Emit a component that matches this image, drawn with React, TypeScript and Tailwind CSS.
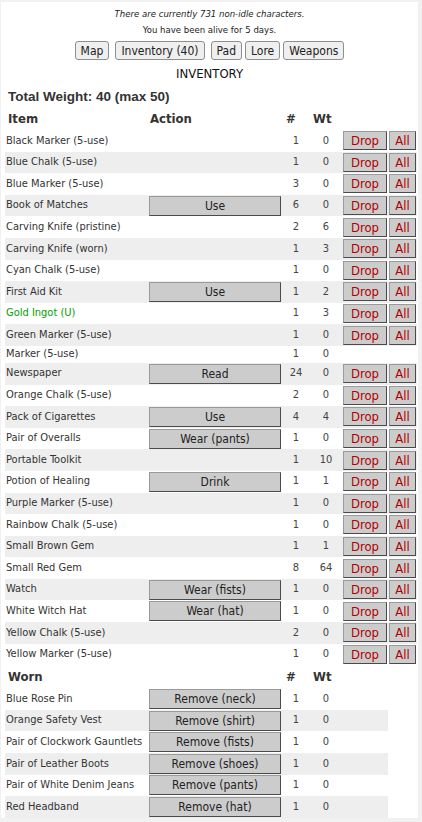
import React from 'react';

type Item = { name: string; action?: string; qty: number; wt: number; drop?: boolean; green?: boolean };

const items: Item[] = [
  { name: 'Black Marker (5-use)', qty: 1, wt: 0, drop: true },
  { name: 'Blue Chalk (5-use)', qty: 1, wt: 0, drop: true },
  { name: 'Blue Marker (5-use)', qty: 3, wt: 0, drop: true },
  { name: 'Book of Matches', action: 'Use', qty: 6, wt: 0, drop: true },
  { name: 'Carving Knife (pristine)', qty: 2, wt: 6, drop: true },
  { name: 'Carving Knife (worn)', qty: 1, wt: 3, drop: true },
  { name: 'Cyan Chalk (5-use)', qty: 1, wt: 0, drop: true },
  { name: 'First Aid Kit', action: 'Use', qty: 1, wt: 2, drop: true },
  { name: 'Gold Ingot (U)', qty: 1, wt: 3, drop: true, green: true },
  { name: 'Green Marker (5-use)', qty: 1, wt: 0, drop: true },
  { name: 'Marker (5-use)', qty: 1, wt: 0 },
  { name: 'Newspaper', action: 'Read', qty: 24, wt: 0, drop: true },
  { name: 'Orange Chalk (5-use)', qty: 2, wt: 0, drop: true },
  { name: 'Pack of Cigarettes', action: 'Use', qty: 4, wt: 4, drop: true },
  { name: 'Pair of Overalls', action: 'Wear (pants)', qty: 1, wt: 0, drop: true },
  { name: 'Portable Toolkit', qty: 1, wt: 10, drop: true },
  { name: 'Potion of Healing', action: 'Drink', qty: 1, wt: 1, drop: true },
  { name: 'Purple Marker (5-use)', qty: 1, wt: 0, drop: true },
  { name: 'Rainbow Chalk (5-use)', qty: 1, wt: 0, drop: true },
  { name: 'Small Brown Gem', qty: 1, wt: 1, drop: true },
  { name: 'Small Red Gem', qty: 8, wt: 64, drop: true },
  { name: 'Watch', action: 'Wear (fists)', qty: 1, wt: 0, drop: true },
  { name: 'White Witch Hat', action: 'Wear (hat)', qty: 1, wt: 0, drop: true },
  { name: 'Yellow Chalk (5-use)', qty: 2, wt: 0, drop: true },
  { name: 'Yellow Marker (5-use)', qty: 1, wt: 0, drop: true },
];

const worn = [
  { name: 'Blue Rose Pin', slot: 'neck' },
  { name: 'Orange Safety Vest', slot: 'shirt' },
  { name: 'Pair of Clockwork Gauntlets', slot: 'fists' },
  { name: 'Pair of Leather Boots', slot: 'shoes' },
  { name: 'Pair of White Denim Jeans', slot: 'pants' },
  { name: 'Red Headband', slot: 'hat' },
];

const font = { fontFamily: '"DejaVu Sans Condensed", "Liberation Sans", sans-serif' };

const gameBtn =
  'bg-[#cccccc] border border-t-[#9a9a9a] border-l-[#9a9a9a] border-b-[#4a4a4a] border-r-[#4a4a4a] leading-none';

function ActionBtn({ label }: { label: string }) {
  return (
    <button className={`${gameBtn} w-[132px] h-[20px] text-[12px] text-[#222]`}>{label}</button>
  );
}

function NavBtn({ label, cls = '' }: { label: string; cls?: string }) {
  return (
    <button
      className={`h-[19px] px-[5px] bg-[#efefef] border border-[#8f8f8f] rounded-[3px] text-[12px] text-[#222] leading-none ${cls}`}
    >
      {label}
    </button>
  );
}

export default function App() {
  return (
    <div className="w-[422px] h-[822px] bg-[#f1f1f1] pt-[2px] pr-[4px] pb-[4px] pl-px" style={font}>
      <div className="h-[816px] bg-white text-[#333]">
        <p className="pt-[5px] h-[21px] text-center text-[9.5px] italic text-[#222] leading-[14px]">
          There are currently 731 non-idle characters.
        </p>
        <p className="h-[17px] text-center text-[9.5px] text-[#222] leading-[14px]">
          You have been alive for 5 days.
        </p>
        <div className="mt-[1px] flex justify-center">
          <NavBtn label="Map" cls="mr-[6px]" />
          <NavBtn label="Inventory (40)" cls="mr-[6px]" />
          <NavBtn label="Pad" cls="mr-[3px]" />
          <NavBtn label="Lore" cls="mr-[3px]" />
          <NavBtn label="Weapons" />
        </div>
        <h2 className="mt-[5px] h-[18px] text-center text-[13px] text-[#111] leading-[18px]">INVENTORY</h2>
        <h1
          className="mt-[3px] pl-[7px] h-[22px] text-[13.5px] font-bold text-[#333] leading-[22px]"
          style={{ fontFamily: '"Liberation Sans", sans-serif' }}
        >
          Total Weight: 40 (max 50)
        </h1>

        <div className="ml-[4px] w-[412px]">
          <div className="flex items-center h-[22px] text-[13px] font-bold text-[#333]">
            <span className="w-[144px] pl-[3px]">Item</span>
            <span className="w-[137px] pl-[1px]">Action</span>
            <span className="w-[27px]">#</span>
            <span className="w-[30px]">Wt</span>
          </div>

          {items.map((it, i) => (
            <div
              key={it.name}
              className={`flex items-center ${it.drop ? 'h-[21.6px]' : 'h-[17px]'} ${i % 2 === 1 ? 'bg-[#eeeeee]' : ''}`}
            >
              <span className={`w-[144px] pl-[1px] text-[11px] ${it.green ? 'text-[#00a000]' : 'text-[#333]'}`}>
                {it.name}
              </span>
              <span className="w-[132px] flex">{it.action && <ActionBtn label={it.action} />}</span>
              <span className="w-[2px]" />
              <span className="w-[26px] text-center text-[11px] text-[#444]">{it.qty}</span>
              <span className="w-[34px] text-center text-[11px] text-[#444]">{it.wt}</span>
              {it.drop && (
                <>
                  <button className={`${gameBtn} w-[44px] h-[19px] text-[13px] text-[#b00000]`}>Drop</button>
                  <span className="w-[2px]" />
                  <button className={`${gameBtn} w-[27px] h-[19px] text-[13px] text-[#b00000]`}>All</button>
                </>
              )}
            </div>
          ))}

          <div className="flex items-center h-[23px] text-[13px] font-bold text-[#333]">
            <span className="w-[281px] pl-[3px]">Worn</span>
            <span className="w-[27px]">#</span>
            <span className="w-[30px]">Wt</span>
          </div>

          {worn.map((w, i) => (
            <div
              key={w.name}
              className={`flex items-center h-[21.6px] w-[383px] ${i % 2 === 1 ? 'bg-[#eeeeee]' : ''}`}
            >
              <span className="w-[144px] pl-[1px] text-[11px] text-[#333] whitespace-nowrap">{w.name}</span>
              <span className="w-[132px] flex">
                <ActionBtn label={`Remove (${w.slot})`} />
              </span>
              <span className="w-[2px]" />
              <span className="w-[26px] text-center text-[11px] text-[#444]">1</span>
              <span className="w-[34px] text-center text-[11px] text-[#444]">0</span>
            </div>
          ))}
        </div>
      </div>
    </div>
  );
}
